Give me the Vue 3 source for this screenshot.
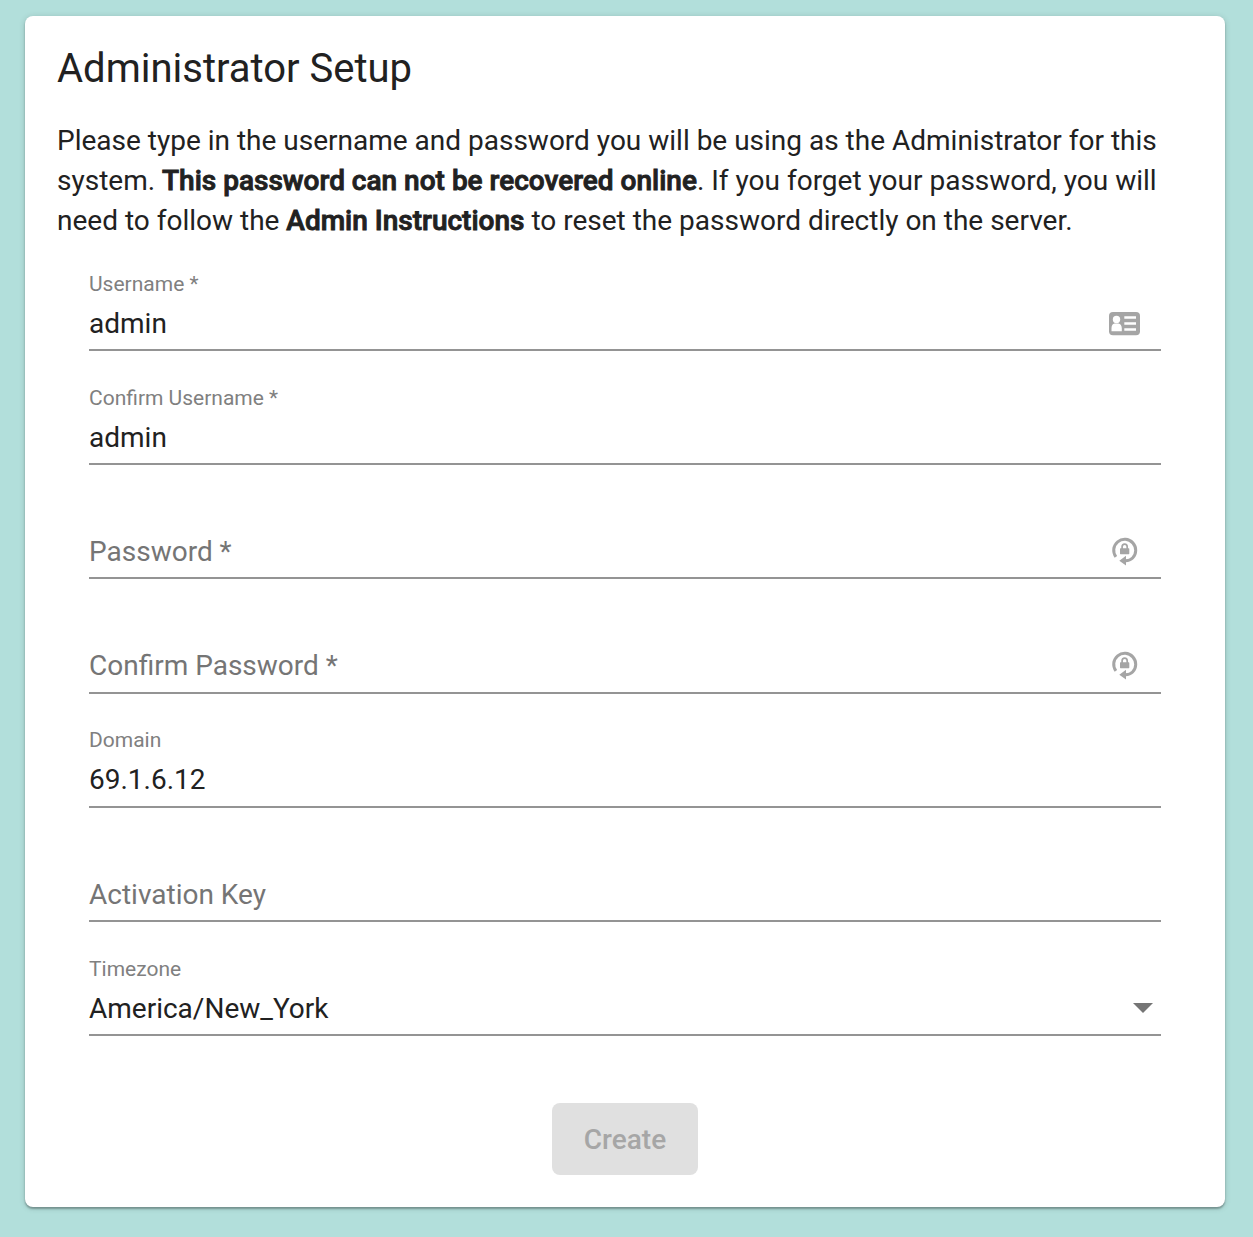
<script setup>
const fields = [
  { label: 'Username *', value: 'admin', icon: 'card' },
  { label: 'Confirm Username *', value: 'admin' },
  { label: 'Password *', icon: 'lock' },
  { label: 'Confirm Password *', icon: 'lock' },
  { label: 'Domain', value: '69.1.6.12' },
  { label: 'Activation Key' },
  { label: 'Timezone', value: 'America/New_York', icon: 'arrow' },
]
</script>

<template>
  <main class="page">
    <section class="card">
      <h1>Administrator Setup</h1>
      <p>Please type in the username and password you will be using as the Administrator for this<br>system. <b>This password can not be recovered online</b>. If you forget your password, you will<br>need to follow the <b>Admin Instructions</b> to reset the password directly on the server.</p>
      <form class="fields">
        <div v-for="f in fields" :key="f.label" class="field">
          <div class="small">{{ f.value ? f.label : '' }}</div>
          <div class="row">
            <span class="text" :class="{ placeholder: !f.value }">{{ f.value || f.label }}</span>
            <svg v-if="f.icon === 'card'" class="icon" width="32" height="24" viewBox="0 0 32 24">
              <rect x="1" y="0" width="31" height="23.300" rx="4" fill="#a5a5a5" />
              <circle cx="8.500" cy="7.500" r="3.700" fill="#fff" />
              <path d="M3.500 19.300v-3c0-2.800 1-4.300 3-4.800h4c2 .5 3.300 2 3.300 4.800v3zM16.300 4.200H28v2.500H16.300zM16.300 10.300H28v2.500H16.300zM16.300 16.300H28v2.500H16.300z" fill="#fff" />
            </svg>
            <svg v-else-if="f.icon === 'lock'" class="lock" width="28" height="30" viewBox="0 0 28 30">
              <path d="M5.900 20.900A11 11 0 1 1 22.600 22Q20 24.600 15.500 24.700" fill="none" stroke="#a5a5a5" stroke-width="3" />
              <path d="M9.300 24.700L16 19.800v9.700z" fill="#a5a5a5" />
              <rect x="10" y="12.300" width="9.300" height="5.900" rx=".6" fill="#a5a5a5" />
              <path d="M12.100 13v-2.200a2.550 2.700 0 0 1 5.100 0V13" fill="none" stroke="#a5a5a5" stroke-width="1.700" />
            </svg>
            <svg v-else-if="f.icon === 'arrow'" class="arrow" width="20" height="10" viewBox="0 0 20 10"><path d="M0 0h20L10 10z" fill="#757575" /></svg>
          </div>
        </div>
      </form>
      <button disabled>Create</button>
    </section>
  </main>
</template>

<style>
body { margin: 0; background: #b2dfdb; }
</style>
<style scoped>
.page { box-sizing: border-box; height: 1237px; padding: 16px 28px 30px 25px; background: #b2dfdb; font-family: Roboto, sans-serif; color: #212121; }
.card { box-sizing: border-box; height: 1191px; padding: 33px 32px 32px; border-radius: 8px; background: #fff; display: flex; flex-direction: column; box-shadow: 0 2px 2px rgba(0,0,0,.28), 0 1px 6px rgba(0,0,0,.16); }
h1 { margin: 0; font-size: 40px; line-height: 40px; font-weight: 400; }
p { margin: 32px 0 0; font-size: 28px; line-height: 40px; white-space: nowrap; }
b { font-weight: 500; -webkit-text-stroke: .900px #212121; }
.fields { margin: 23px 32px 0; }
.field { box-sizing: border-box; height: 87px; margin-bottom: 27.200px; padding-top: .6px; border-bottom: 2px solid #949494; }
.small { height: 38px; font-size: 21px; line-height: 38px; color: #808080; }
.row { height: 40px; display: flex; align-items: center; justify-content: space-between; font-size: 28px; line-height: 40px; }
.text { margin-top: 2px; }
.placeholder { color: #757575; }
.icon { margin: 2px 21px 0 0; }
.lock { margin-right: 23px; }
.arrow { margin-right: 8px; }
button { align-self: center; width: 146px; height: 72px; margin-top: 40px; border: 0; border-radius: 8px; background: #e0e0e0; color: #a6a6a6; font: 500 28px Roboto, sans-serif; }
</style>
